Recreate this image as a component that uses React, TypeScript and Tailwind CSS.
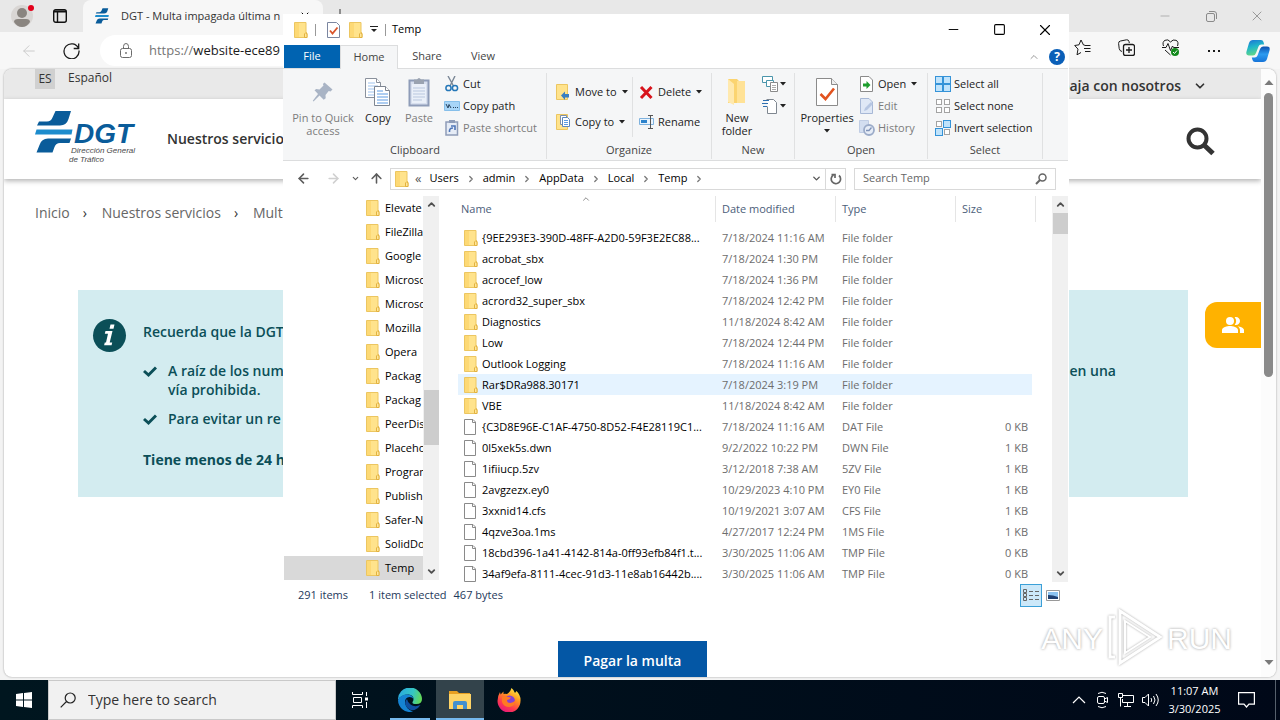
import React from "react";
import clsx from "clsx";
import {
  ArrowLeft,
  ArrowRight,
  ArrowUp,
  ChevronDown,
  ChevronRight,
  ChevronUp,
  Minus,
  Square,
  X,
} from "lucide-react";
import { MdPeopleAlt } from "react-icons/md";

interface FileRow {
  name: string;
  date: string;
  type: string;
  size?: string;
  selected?: boolean;
}

const files: FileRow[] = [
  { name: "{9EE293E3-390D-48FF-A2D0-59F3E2EC88...", date: "7/18/2024 11:16 AM", type: "File folder" },
  { name: "acrobat_sbx", date: "7/18/2024 1:30 PM", type: "File folder" },
  { name: "acrocef_low", date: "7/18/2024 1:36 PM", type: "File folder" },
  { name: "acrord32_super_sbx", date: "7/18/2024 12:42 PM", type: "File folder" },
  { name: "Diagnostics", date: "11/18/2024 8:42 AM", type: "File folder" },
  { name: "Low", date: "7/18/2024 12:44 PM", type: "File folder" },
  { name: "Outlook Logging", date: "7/18/2024 11:16 AM", type: "File folder" },
  { name: "Rar$DRa988.30171", date: "7/18/2024 3:19 PM", type: "File folder", selected: true },
  { name: "VBE", date: "11/18/2024 8:42 AM", type: "File folder" },
  { name: "{C3D8E96E-C1AF-4750-8D52-F4E28119C1...", date: "7/18/2024 11:16 AM", type: "DAT File", size: "0 KB" },
  { name: "0l5xek5s.dwn", date: "9/2/2022 10:22 PM", type: "DWN File", size: "1 KB" },
  { name: "1ifiiucp.5zv", date: "3/12/2018 7:38 AM", type: "5ZV File", size: "1 KB" },
  { name: "2avgzezx.ey0", date: "10/29/2023 4:10 PM", type: "EY0 File", size: "1 KB" },
  { name: "3xxnid14.cfs", date: "10/19/2021 3:07 AM", type: "CFS File", size: "1 KB" },
  { name: "4qzve3oa.1ms", date: "4/27/2017 12:24 PM", type: "1MS File", size: "1 KB" },
  { name: "18cbd396-1a41-4142-814a-0ff93efb84f1.t...", date: "3/30/2025 11:06 AM", type: "TMP File", size: "0 KB" },
  { name: "34af9efa-8111-4cec-91d3-11e8ab16442b....", date: "3/30/2025 11:06 AM", type: "TMP File", size: "0 KB" },
];

const treeFolders = [
  "Elevate",
  "FileZilla",
  "Google",
  "Microso",
  "Microso",
  "Mozilla",
  "Opera",
  "Packag",
  "Packag",
  "PeerDis",
  "Placeho",
  "Program",
  "Publish",
  "Safer-N",
  "SolidDo",
  "Temp",
];

const crumbs = ["Users", "admin", "AppData", "Local", "Temp"];

/* ---------- icons ---------- */

function FolderIcon() {
  return (
    <svg width="14" height="16" viewBox="0 0 14 16" className="shrink-0">
      <path d="M.5 .5H12V10l1 1v4.500H.5Z" fill="#ffe38c" stroke="#ecc661" />
      <path d="M1 1h4v14H1Z" fill="#fdd975" />
      <path d="M10.500 15.500v-3.500q1-2.500 2.500 0v3.500Z" fill="#ffe79c" stroke="#e3b23f" />
    </svg>
  );
}

function PageIcon() {
  return (
    <svg width="14" height="16" viewBox="0 0 14 16" className="shrink-0">
      <path d="M.5 .5H9l2.500 2.500V15.500H.5Z" fill="#fff" stroke="#8a8a8a" />
      <path d="M8.500 .5V3.500h3" fill="none" stroke="#8a8a8a" />
    </svg>
  );
}

function CheckPageIcon({ large = false }: { large?: boolean }) {
  return (
    <svg width={large ? 22 : 13} height={large ? 30 : 16} viewBox={large ? "0 0 22 30" : "0 0 13 16"}>
      {large ? (
        <>
          <path d="M.5 1.500H15.500l6 6V28.500H.5Z" fill="#fff" stroke="#8b8b8b" />
          <path d="M15.500 1.500v6h6" fill="#eee" stroke="#8b8b8b" />
          <path d="M4.500 17l5 5L18 11.500" fill="none" stroke="#e2531f" strokeWidth="2.600" />
        </>
      ) : (
        <>
          <path d="M.5 .5H9.500l3 3v12H.5Z" fill="#fff" stroke="#7b86a0" />
          <path d="M3 8.500l2.500 3L10.500 5.500" fill="none" stroke="#d9552b" strokeWidth="1.800" />
        </>
      )}
    </svg>
  );
}

function Caret({ className = "" }: { className?: string }) {
  return (
    <svg width="6" height="4" viewBox="0 0 6 4" className={clsx("shrink-0", className)}>
      <path d="M0 0h6L3 3.500Z" fill="#222" />
    </svg>
  );
}

function PinIcon() {
  return (
    <svg width="22" height="22" viewBox="0 0 22 22">
      <path d="M12.500 1.500l8 7-2 2-1.800-.4-3.200 4 .2 3.200-2 1.400L7.500 14.500 1.500 20.500.8 19.800 6 13 2.500 9.300 4.200 8l3.300.5 4-4-.6-1.600Z" fill="#a9b4c5" />
    </svg>
  );
}

function CopyIcon() {
  return (
    <svg width="26" height="30" viewBox="0 0 26 30">
      <g stroke="#8a919c" fill="#fff">
        <path d="M.5 1.500h11l4 4v15H.5Z" />
        <path d="M11.500 1.500v4h4" />
      </g>
      <path d="M3 6h7M3 9h10M3 12h10M3 15h10M3 18h8" stroke="#9fc3ee" />
      <g stroke="#7d8591" fill="#fff">
        <path d="M9.500 9.500h11l4 4v15h-15Z" />
        <path d="M20.500 9.500v4h4" />
      </g>
      <path d="M12 14h6M12 17h11M12 20h11M12 23h11M12 26h11" stroke="#5c9be3" />
    </svg>
  );
}

function PasteIcon() {
  return (
    <svg width="22" height="30" viewBox="0 0 22 30">
      <path d="M1.500 3.500h19v25h-19Z" fill="#d7dfee" stroke="#8e9cb8" strokeWidth="2" />
      <path d="M4 7h14v19H4Z" fill="#eaf0f9" />
      <path d="M5 11h12M5 14h12M5 17h12M5 20h12M5 23h9" stroke="#b9c7de" />
      <path d="M6 2.500h3q2-3 4 0h3V7H6Z" fill="#9aa3b1" />
    </svg>
  );
}

function CutIcon() {
  return (
    <svg width="16" height="16" viewBox="0 0 16 16" fill="none">
      <path d="M4 0l5.500 10M11 0L6 10" stroke="#7a8796" strokeWidth="1.400" />
      <circle cx="4.500" cy="12" r="2.600" stroke="#2577b8" strokeWidth="1.500" />
      <circle cx="11" cy="12" r="2.600" stroke="#2577b8" strokeWidth="1.500" />
    </svg>
  );
}

function CopyPathIcon() {
  return (
    <svg width="16" height="16" viewBox="0 0 16 16">
      <path d="M.5 3.500h15v9H.5Z" fill="#a8d5f7" stroke="#86bfea" />
      <path d="M2 6l2 4 1-3.500L7 10M9 9.500h1M11 9.500h1M13 9.500h1" stroke="#28435e" fill="none" />
    </svg>
  );
}

function PasteShortcutIcon() {
  return (
    <svg width="16" height="16" viewBox="0 0 16 16">
      <path d="M2 2h11.500v13H2Z" fill="#e6ecf6" stroke="#8e9cb8" strokeWidth="1.500" />
      <path d="M5 0h6v3H5Z" fill="#8e9cb8" />
      <path d="M5.500 12q-.5-4 3.500-4M7 6h4v4" stroke="#4f76b8" strokeWidth="1.600" fill="none" />
    </svg>
  );
}

function MoveToIcon({ copy = false }: { copy?: boolean }) {
  return (
    <svg width="16" height="16" viewBox="0 0 16 16">
      <path d="M.5 .5h11v15H.5Z" fill="#ffe38c" stroke="#ecc661" />
      {copy ? (
        <>
          <path d="M4.500 1.500h6v9h-6Z" fill="#fff" stroke="#7d8fa8" />
          <path d="M6.500 3.500h5l2 2v7h-7Z" fill="#fff" stroke="#5c87bf" />
          <path d="M8 6.500h4M8 8.500h4M8 10.500h4" stroke="#5c9be3" />
        </>
      ) : (
        <path d="M5 11.500l4-4v2.500h4v3.500H9V16Z" fill="#3a7fc2" />
      )}
    </svg>
  );
}

function DeleteIcon() {
  return (
    <svg width="16" height="16" viewBox="0 0 16 16">
      <path d="M2 3l10.500 11M12.500 3L2 14" stroke="#d8141c" strokeWidth="3" />
    </svg>
  );
}

function RenameIcon() {
  return (
    <svg width="16" height="16" viewBox="0 0 16 16" fill="none">
      <path d="M.5 4.500h14v6H.5Z" fill="#eaf4fd" stroke="#7fb2de" />
      <path d="M2 6h6v3H2Z" fill="#2d83cc" />
      <path d="M9 1.500h5M9 14.500h5M11.500 1.500v13" stroke="#555" />
    </svg>
  );
}

function NewFolderIcon() {
  return (
    <svg width="20" height="28" viewBox="0 0 20 28">
      <path d="M1 1h9l2 2h6v22H1Z" fill="#fbd470" />
      <path d="M10 3h8v22h-8Z" fill="#ffe296" />
      <path d="M1 1l6 5v21l-6-3Z" fill="#ffe9ae" />
    </svg>
  );
}

function NewItemIcon() {
  return (
    <svg width="17" height="16" viewBox="0 0 17 16" fill="#fff">
      <path d="M.5 .5h10v6H.5Z" stroke="#4a95ab" />
      <path d="M4.500 4.500h7v6h-7Z" stroke="#4a95ab" />
      <path d="M8.500 6.500h7v9h-7Z" stroke="#8a8a8a" />
      <path d="M10 9.500h4M10 11.500h4M10 13.500h4" stroke="#aaa" />
    </svg>
  );
}

function EasyAccessIcon() {
  return (
    <svg width="17" height="16" viewBox="0 0 17 16" fill="none">
      <path d="M4.500 1.500h7l3 3v11h-9v-7" fill="#fff" stroke="#7f8790" />
      <path d="M1 2.500h6M0 5.500h6M1 8.500h4" stroke="#2e6fb0" />
    </svg>
  );
}

function OpenIcon({ kind }: { kind: "open" | "edit" | "history" }) {
  if (kind === "history") {
    return (
      <svg width="16" height="16" viewBox="0 0 16 16">
        <path d="M.5 .5h9v12h-9Z" fill="#d3def0" stroke="#c0cde4" />
        <circle cx="10" cy="10" r="5" fill="#e7edf7" stroke="#9cacc9" strokeWidth="1.800" />
        <path d="M7 10.500h3l2.500-3" stroke="#7f93b8" strokeWidth="1.300" fill="none" />
      </svg>
    );
  }
  return (
    <svg width="16" height="16" viewBox="0 0 16 16">
      <path d="M1.500 .5h8.500l3.500 3.500v11.500h-12Z" fill={kind === "open" ? "#fff" : "#dfe8f6"} stroke={kind === "open" ? "#8a8a8a" : "#a7b8d6"} />
      {kind === "open" ? (
        <path d="M4 7.500h3.500V5l4 4-4 4v-2.500H4Z" fill="#1e9e2d" />
      ) : (
        <path d="M5 13l1-3 6-6 2 2-6 6Z" fill="#b6c6e2" />
      )}
    </svg>
  );
}

function SelectIcon({ filled }: { filled: boolean[] }) {
  const spots = [
    [0.5, 0.5],
    [8.5, 0.5],
    [0.5, 8.5],
    [8.5, 8.5],
  ];
  return (
    <svg width="16" height="16" viewBox="0 0 16 16">
      {spots.map(([x, y], i) => (
        <rect
          key={i}
          x={filled[i] ? x : x + 1}
          y={filled[i] ? y : y + 1}
          width={filled[i] ? 7 : 5}
          height={filled[i] ? 7 : 5}
          fill={filled[i] ? "#c0e3fb" : "#fff"}
          stroke={filled[i] ? "#3593d8" : "#a3a3a3"}
        />
      ))}
    </svg>
  );
}

function SearchGlass() {
  return (
    <svg width="16" height="16" viewBox="0 0 16 16" fill="none" stroke="currentColor" className="shrink-0">
      <path d="M7 9L.7 15.300M15.200 6a5 5 0 1 1-10 0 5 5 0 0 1 10 0Z" strokeWidth="1.200" />
    </svg>
  );
}

function DgtShapes() {
  return (
    <>
      <path d="M20.500 0H36l-2.500 8q-2 6.500-8.500 6.500H2L4 10.500H12q4 0 5.500-4Z" fill="#0a5c9a" />
      <path d="M1.500 18.500H37.500L36.500 23.500H0Z" fill="#1c8ccd" />
      <path d="M36 27.500L34.500 32H25q-4 0-5.500 4l-2 5.500H1.500L4.500 34q2-6.500 8.500-6.500Z" fill="#0a5c9a" />
    </>
  );
}

function CopilotIcon() {
  return (
    <svg width="24" height="24" viewBox="0 0 24 24">
      <defs>
        <linearGradient id="cop-a" x1="0" y1="0" x2="0.300" y2="1">
          <stop offset="0" stopColor="#1d6fd6" />
          <stop offset="0.500" stopColor="#1fb6c9" />
          <stop offset="1" stopColor="#5fd68a" />
        </linearGradient>
        <linearGradient id="cop-b" x1="0.500" y1="0" x2="0.500" y2="1">
          <stop offset="0" stopColor="#0c4fae" />
          <stop offset="0.500" stopColor="#2b9bf0" />
          <stop offset="1" stopColor="#1674d8" />
        </linearGradient>
      </defs>
      <path d="M7 1h8q2 0 2.500 2l.7 2.500h-3q-2 0-2.700 2L10 14q-1 2.500-3 2.500H3q-3.500 0-2.500-4L3 4q1-3 4-3Z" fill="url(#cop-a)" />
      <path d="M17 23H9q-2 0-2.500-2l-.7-2.500h3q2 0 2.700-2L14 10q1-2.500 3-2.500h4q3.500 0 2.500 4L21 20q-1 3-4 3Z" fill="url(#cop-b)" />
    </svg>
  );
}

function EdgeIcon() {
  return (
    <svg width="24" height="24" viewBox="0 0 24 24">
      <defs>
        <linearGradient id="edge-a" x1="0" y1="0.300" x2="1" y2="0.500">
          <stop offset="0" stopColor="#2aa9e0" />
          <stop offset="0.600" stopColor="#35c6c4" />
          <stop offset="1" stopColor="#63d957" />
        </linearGradient>
      </defs>
      <path d="M0 12A12 12 0 0 1 24 11q0 5-5.500 5-4.500 0-4-2 1-1 1-3 0-4-5-4.500Q3 6.500 0 12Z" fill="url(#edge-a)" />
      <path d="M0 12Q3 6 10 6.500q5 .5 5.500 4.500-1-2-4-2Q7 9.500 7 14q.5 7 8 9.600A12 12 0 0 1 0 12Z" fill="#1583d3" />
      <path d="M9 11q-3 3-1 7 3 5 8.500 4 4-1.500 6-5-6 2.500-10-.5-3-2.500-3.500-5.500Z" fill="#0f4fa0" />
    </svg>
  );
}

function FirefoxIcon() {
  return (
    <svg width="24" height="24" viewBox="0 0 24 24">
      <defs>
        <linearGradient id="fox" x1="0.800" y1="0" x2="0.250" y2="1">
          <stop offset="0" stopColor="#fff04a" />
          <stop offset="0.350" stopColor="#ff9a1f" />
          <stop offset="0.700" stopColor="#ff3b4d" />
          <stop offset="1" stopColor="#e5157f" />
        </linearGradient>
      </defs>
      <path d="M14.500 0q2.500 2 3.500 5l1.500-2q4.500 4.500 4 10A11.500 11.500 0 0 1 .5 13Q.5 8 3 4l.6 2.500Q5 5 6.500 3.500V6q1.500-.6 3.500 0 3.500-2 4.500-6Z" fill="url(#fox)" />
      <circle cx="12.500" cy="13" r="5.500" fill="#8441d6" />
      <path d="M5 9q3-2 6 0l3 .5q-1 2-4 2.500 0 3 3.500 3 3 0 5-3 0 6-6 7-6 0-7.500-5Z" fill="#ff7a22" />
    </svg>
  );
}

function ExplorerIcon() {
  return (
    <svg width="22" height="20" viewBox="0 0 22 20">
      <path d="M0 1h8l2 2h11v3H0Z" fill="#e9a021" />
      <path d="M0 4h22v15H0Z" fill="#ffd466" />
      <path d="M4 19v-6q0-2 2-2h10q2 0 2 2v6h-4v-4H8v4Z" fill="#4390cf" />
    </svg>
  );
}

function CheckMark() {
  return (
    <svg width="14" height="19" viewBox="0 0 14 19" fill="none" className="shrink-0">
      <path d="M1 10l4.500 4L13 6.500" stroke="#0b4f58" strokeWidth="3" />
    </svg>
  );
}

/* ---------- browser ---------- */

function BrowserChrome() {
  return (
    <header>
      <div className="flex h-8 bg-[#e8e8e8]">
        <div className="flex w-[83px] items-center gap-5 pl-[11px]">
          <button className="relative" aria-label="Profile">
            <svg width="22" height="24" viewBox="0 0 22 24">
              <circle cx="11" cy="12" r="11" fill="#d9d6d4" />
              <circle cx="11" cy="9" r="5" fill="#8a8580" />
              <path d="M3 18q0-3 4-3h8q4 0 4 3-3 5-8 5t-8-5Z" fill="#8a8580" />
            </svg>
            <span className="absolute top-px -right-px size-[6px] rounded-full bg-[#e3001b]" />
          </button>
          <button aria-label="Workspaces">
            <svg width="14" height="14" viewBox="0 0 14 14" fill="none" stroke="#111">
              <rect x=".7" y=".7" width="12.600" height="12.600" rx="2" strokeWidth="1.400" />
              <path d="M1 2.500h12" strokeWidth="2" />
              <path d="M4.500 3v10" strokeWidth="1.400" />
            </svg>
          </button>
        </div>
        <div className="flex w-60 items-center gap-3 overflow-hidden rounded-t-lg bg-[#f7f7f7] px-3">
          <svg width="14" height="16" viewBox="0 0 38 42" className="shrink-0">
            <DgtShapes />
          </svg>
          <span className="flex-1 text-[11px] whitespace-nowrap text-[#333]">DGT - Multa impagada última n</span>
          <button aria-label="Close tab">
            <X size={12} />
          </button>
        </div>
        <button className="px-[10px] text-[#333]" aria-label="New tab">
          <svg width="14" height="14" viewBox="0 0 14 14" stroke="currentColor">
            <path d="M7 0v14M0 7h14" />
          </svg>
        </button>
        <div className="flex flex-1 justify-end text-[#8a8a8a]">
          <button className="flex w-[46px] items-center justify-center" aria-label="Minimize">
            <Minus size={14} strokeWidth={1} />
          </button>
          <button className="flex w-[46px] items-center justify-center" aria-label="Restore">
            <svg width="11" height="11" viewBox="0 0 11 11" fill="none" stroke="currentColor">
              <rect x=".5" y="2.500" width="8" height="8" rx="1.500" />
              <path d="M3 .5h5q2.500 0 2.500 2.500v5" />
            </svg>
          </button>
          <button className="flex w-[46px] items-center justify-center" aria-label="Close">
            <X size={16} strokeWidth={1.25} />
          </button>
        </div>
      </div>

      <div className="flex h-[37px] items-center bg-[#f7f7f7]">
        <div className="flex w-[100px] items-center gap-[25px] pl-5">
          <button className="text-[#c9c9c9]" aria-label="Back">
            <ArrowLeft size={18} strokeWidth={1.25} />
          </button>
          <button aria-label="Reload">
            <svg width="17" height="17" viewBox="0 0 17 17" fill="none" stroke="#1b1b1b" strokeWidth="1.300">
              <path d="M15.500 6.500A7.500 7.500 0 1 0 16 8.500M15.700 1.500v5h-5" />
            </svg>
          </button>
        </div>
        <div className="flex h-[31px] flex-1 items-center rounded-full bg-white pl-5">
          <svg width="12" height="16" viewBox="0 0 12 16" fill="none" stroke="#6b6b6b" className="mr-[17px]">
            <rect x=".5" y="5.500" width="11" height="9" rx="2" />
            <path d="M3.500 5V3.500q0-3 2.500-3t2.500 3V5" />
            <circle cx="6" cy="10" r=".6" />
          </svg>
          <label htmlFor="url" className="text-[13px] text-[#767676]">
            https://
          </label>
          <input id="url" className="min-w-0 flex-1 text-[13px] text-[#1b1b1b] outline-none" defaultValue="website-ece89" />
        </div>
        <div className="flex text-[#1b1b1b]">
          <button className="flex w-11 justify-center" aria-label="Favorites">
            <svg width="17" height="17" viewBox="0 0 17 17" fill="none" stroke="currentColor">
              <path d="M11 6.300L9.500 6 7 1 5 5.800.7 6.500l3.300 3.600L3 15.800 7 13.500M11 6.500h5.500M10 9.500h6.500M11 12.500h5.500" />
            </svg>
          </button>
          <button className="flex w-11 justify-center" aria-label="Collections">
            <svg width="17" height="17" viewBox="0 0 17 17" fill="none" stroke="currentColor">
              <path d="M4 12.500Q1.500 12 1.200 9.500L.6 4.500Q.5 2.300 2.500 2l6-1.200q2-.3 2.500 1.700l.3 1.500" />
              <rect x="5.500" y="5.500" width="11" height="11" rx="2" strokeWidth="1.300" />
              <path d="M11 8v6M8 11h6" strokeWidth="1.300" />
            </svg>
          </button>
          <button className="flex w-11 justify-center" aria-label="Browser essentials">
            <svg width="17" height="17" viewBox="0 0 17 17" fill="none" stroke="currentColor">
              <path d="M1.500 7Q0 3 3 1.300T8.500 3Q11 0 14 1.300T15.500 7M0 8.500h4L6 4.500l2.500 7L10.500 7l1 1.500H17M3 11l5.500 5" />
              <circle cx="13" cy="13" r="4" fill="#138a1c" stroke="none" />
              <path d="M11 13l1.500 1.500L15 11.500" stroke="#fff" />
            </svg>
          </button>
          <button className="flex w-11 items-center justify-center" aria-label="More">
            <svg width="14" height="4" viewBox="0 0 14 4">
              <path d="M1 1h2v2H1ZM6 1h2v2H6ZM11 1h2v2H11Z" fill="currentColor" />
            </svg>
          </button>
          <button className="flex w-11 justify-center" aria-label="Copilot">
            <CopilotIcon />
          </button>
        </div>
      </div>
    </header>
  );
}

function SitePage() {
  return (
    <div className="relative min-w-0 flex-1 overflow-hidden">
      <div className="flex h-[30px] justify-between bg-[#e9e9e9] pr-[54px] pl-[31px]">
        <div className="flex gap-[13px] text-xs font-medium text-[#333]">
          <span className="flex h-5 w-5 items-center justify-center bg-[#d0d0d0] pb-px">ES</span>
          <span className="leading-[18px]">Español</span>
        </div>
        <button className="flex items-center gap-3 pt-1 text-sm font-semibold text-[#333]">
          Trabaja con nosotros
          <ChevronDown size={14} strokeWidth={3} />
        </button>
      </div>

      <div className="relative flex h-20 items-center justify-between bg-white pr-[46px] pl-[31px] shadow-[0_2px_5px_rgba(0,0,0,0.3)]">
        <div className="flex items-center gap-[31px]">
          <svg width="101" height="56" viewBox="0 0 101 56">
            <DgtShapes />
            <text x="39" y="32" fontSize="28" fontWeight="700" fontStyle="italic" fontFamily="Liberation Sans, sans-serif" fill="#0a5c9a">
              DGT
            </text>
            <g fontSize="8" fontStyle="italic" fontFamily="Liberation Sans, sans-serif" fill="#4a4a4a">
              <text x="36" y="42">Dirección General</text>
              <text x="34" y="51">de Tráfico</text>
            </g>
          </svg>
          <a href="#servicios" className="text-sm font-semibold text-[#333]">
            Nuestros servicios
          </a>
        </div>
        <button className="pt-1 text-[#333]" aria-label="Buscar">
          <svg width="30" height="30" viewBox="0 0 30 30" fill="none" stroke="currentColor">
            <circle cx="12.500" cy="12.500" r="9" strokeWidth="4" />
            <path d="M19 19l9 8.500" strokeWidth="5" />
          </svg>
        </button>
      </div>

      <nav className="mt-[23px] flex h-[22px] items-center gap-[13px] pl-[31px] text-sm text-[#666]">
        <a href="#inicio">Inicio</a>
        <span className="w-[6px] text-[#333]">›</span>
        <a href="#servicios">Nuestros servicios</a>
        <span className="w-[6px] text-[#333]">›</span>
        <a href="#multas">Mult</a>
      </nav>

      <section className="mr-[73px] ml-[74px] mt-[66px] flex h-[207px] gap-4 bg-[#d3ecf0] pt-[27px] pr-[72px] pl-[14px] text-sm font-semibold text-[#0b4f58]">
        <svg width="35" height="35" viewBox="0 0 35 35" className="mt-px shrink-0">
          <circle cx="17.500" cy="17.500" r="16.500" fill="#0b4f58" />
          <path d="M18.500 6.500h4l-1 4.200h-4ZM13.500 13h7l-2.800 11.500h2.500l-.6 2.800h-7.500l.7-2.800h1.200l2-8.700h-3.200Z" fill="#fff" />
        </svg>
        <div className="min-w-0 flex-1">
          <p className="leading-[30px]">Recuerda que la DGT</p>
          <ul className="mt-[14px] space-y-[10px] leading-[19px]">
            <li className="flex gap-[11px]">
              <CheckMark />
              <div className="flex-1">
                <p className="flex justify-between">
                  <span>A raíz de los num</span>
                  <span>en una</span>
                </p>
                <p>vía prohibida.</p>
              </div>
            </li>
            <li className="flex gap-[11px]">
              <CheckMark />
              <p>Para evitar un re</p>
            </li>
          </ul>
          <p className="mt-[22px] font-bold">Tiene menos de 24 h</p>
        </div>
      </section>

      <button className="mx-auto mt-36 block h-10 w-[149px] bg-[#0457a5] text-sm font-semibold text-white">
        Pagar la multa
      </button>

      <button className="absolute top-[233px] right-0 flex h-[46px] w-14 items-center justify-center rounded-l-xl bg-[#ffb200] text-white" aria-label="Contacto">
        <MdPeopleAlt size={24} />
      </button>
    </div>
  );
}

function Browser() {
  return (
    <div className="flex h-full flex-col bg-[#f3f3f3]">
      <BrowserChrome />
      <main className="mx-1 mb-[3px] flex min-h-0 flex-1 overflow-hidden rounded-lg bg-white shadow-[0_0_2px_rgba(0,0,0,0.4)]">
        <SitePage />
        <div className="flex w-[15px] flex-col items-center bg-[#fcfcfc] py-[10px]">
          <svg width="10" height="8" viewBox="0 0 10 8" className="mb-[6px]">
            <path d="M5 1l4.500 5h-9Z" fill="#7a7a7a" />
          </svg>
          <div className="h-[284px] w-[9px] rounded-full bg-[#8a8a8a]" />
          <svg width="10" height="8" viewBox="0 0 10 8" className="mt-auto">
            <path d="M.5 1h9L5 6Z" fill="#7a7a7a" />
          </svg>
        </div>
      </main>
    </div>
  );
}

/* ---------- file explorer ---------- */

function RibbonGroup({ label, className, children }: { label: string; className: string; children: React.ReactNode }) {
  return (
    <div className={clsx("mt-1 mb-px flex shrink-0 flex-col border-r border-[#e0e1e2]", className)}>
      <div className="flex flex-1">{children}</div>
      <div className="h-[18px] text-center leading-[18px] text-[#444]">{label}</div>
    </div>
  );
}

function BigButton({ icon, disabled, className, children }: { icon: React.ReactNode; disabled?: boolean; className: string; children: React.ReactNode }) {
  return (
    <button className={clsx("flex flex-col items-center leading-[13px]", disabled ? "text-[#7c7c7c]" : "text-[#222]", className)}>
      <span className="flex h-[38px] items-center">{icon}</span>
      {children}
    </button>
  );
}

function SmallButton({ icon, label, disabled, menu }: { icon: React.ReactNode; label: string; disabled?: boolean; menu?: boolean }) {
  return (
    <button className={clsx("flex h-[22px] items-center gap-[3px] whitespace-nowrap", disabled ? "text-[#7c7c7c]" : "text-[#222]")}>
      {icon}
      {label}
      {menu && <Caret className="ml-[2px]" />}
    </button>
  );
}

function Ribbon() {
  return (
    <div className="flex h-[92px] border-b border-[#dcddde] bg-[#f5f6f7] pl-px text-[11px]">
      <RibbonGroup label="Clipboard" className="w-[263px]">
        <BigButton icon={<PinIcon />} disabled className="w-[78px]">
          <span>Pin to Quick</span>
          <span>access</span>
        </BigButton>
        <BigButton icon={<CopyIcon />} className="w-8">
          Copy
        </BigButton>
        <BigButton icon={<PasteIcon />} disabled className="w-[50px]">
          Paste
        </BigButton>
        <div>
          <SmallButton icon={<CutIcon />} label="Cut" />
          <SmallButton icon={<CopyPathIcon />} label="Copy path" />
          <SmallButton icon={<PasteShortcutIcon />} label="Paste shortcut" disabled />
        </div>
      </RibbonGroup>

      <RibbonGroup label="Organize" className="w-[165px]">
        <div className="my-1 flex w-[86px] flex-col justify-between border-r border-[#e0e1e2] py-1 pl-[9px]">
          <SmallButton icon={<MoveToIcon />} label="Move to" menu />
          <SmallButton icon={<MoveToIcon copy />} label="Copy to" menu />
        </div>
        <div className="my-1 flex flex-col justify-between py-1 pl-[6px]">
          <SmallButton icon={<DeleteIcon />} label="Delete" menu />
          <SmallButton icon={<RenameIcon />} label="Rename" />
        </div>
      </RibbonGroup>

      <RibbonGroup label="New" className="w-[83px]">
        <BigButton icon={<NewFolderIcon />} className="w-[50px]">
          <span>New</span>
          <span>folder</span>
        </BigButton>
        <div>
          <button className="flex h-[22px] items-center gap-px" aria-label="New item">
            <NewItemIcon />
            <Caret />
          </button>
          <button className="flex h-[22px] items-center gap-px" aria-label="Easy access">
            <EasyAccessIcon />
            <Caret />
          </button>
        </div>
      </RibbonGroup>

      <RibbonGroup label="Open" className="w-[133px]">
        <BigButton icon={<CheckPageIcon large />} className="w-16">
          Properties
          <Caret className="mt-[5px]" />
        </BigButton>
        <div>
          <SmallButton icon={<OpenIcon kind="open" />} label="Open" menu />
          <SmallButton icon={<OpenIcon kind="edit" />} label="Edit" disabled />
          <SmallButton icon={<OpenIcon kind="history" />} label="History" disabled />
        </div>
      </RibbonGroup>

      <RibbonGroup label="Select" className="w-[115px]">
        <div className="pl-[7px]">
          <SmallButton icon={<SelectIcon filled={[true, true, true, true]} />} label="Select all" />
          <SmallButton icon={<SelectIcon filled={[false, false, false, false]} />} label="Select none" />
          <SmallButton icon={<SelectIcon filled={[false, true, true, false]} />} label="Invert selection" />
        </div>
      </RibbonGroup>
    </div>
  );
}

function AddressRow() {
  return (
    <div className="flex h-[35px] items-center pr-3 pl-px text-[11px]">
      <div className="flex w-[106px] items-center text-[#5c5c5c]">
        <button className="ml-3" aria-label="Back">
          <ArrowLeft size={15} strokeWidth={2.5} />
        </button>
        <button className="ml-[15px] text-[#d0d0d0]" aria-label="Forward">
          <ArrowRight size={15} strokeWidth={2.5} />
        </button>
        <button className="ml-[10px]" aria-label="Recent locations">
          <ChevronDown size={9} strokeWidth={3} />
        </button>
        <button className="ml-[9px]" aria-label="Up">
          <ArrowUp size={15} strokeWidth={2.5} />
        </button>
      </div>
      <div className="flex h-[22px] flex-1 items-center border border-[#d9d9d9] pl-1">
        <FolderIcon />
        <span className="mr-2 ml-[6px] text-[13px] text-[#555]">«</span>
        {crumbs.map((crumb) => (
          <React.Fragment key={crumb}>
            <a href="#path">{crumb}</a>
            <ChevronRight size={10} strokeWidth={3} className="mx-[7px] text-[#777]" />
          </React.Fragment>
        ))}
        <button className="ml-auto px-[3px] text-[#555]" aria-label="Previous locations">
          <ChevronDown size={11} strokeWidth={3} />
        </button>
        <button className="flex h-full w-5 items-center justify-center border-l border-[#d9d9d9] text-[#666]" aria-label="Refresh">
          <svg width="12" height="12" viewBox="0 0 12 12" fill="none" stroke="currentColor" strokeWidth="1.700">
            <path d="M3.500 2A4.700 4.700 0 1 0 9 2.500M1.500 1.500H5V5" />
          </svg>
        </button>
      </div>
      <div className="ml-2 flex h-[22px] w-[202px] items-center border border-[#d9d9d9] px-2 text-[#666]">
        <input aria-label="Search Temp" placeholder="Search Temp" className="min-w-0 flex-1 outline-none placeholder:text-[#666]" />
        <svg width="12" height="12" viewBox="0 0 12 12" fill="none" stroke="currentColor">
          <circle cx="7.500" cy="4.500" r="3.500" strokeWidth="1.500" />
          <path d="M5 7L1 11" strokeWidth="2" />
        </svg>
      </div>
    </div>
  );
}

function ScrollTrack({ className, children }: { className?: string; children: React.ReactNode }) {
  return (
    <div className={clsx("flex w-4 shrink-0 flex-col items-center bg-[#f0f0f0] text-[#505050]", className)}>
      <ChevronUp size={11} strokeWidth={4} className="my-[3px] shrink-0" />
      {children}
      <ChevronDown size={11} strokeWidth={4} className="mt-auto mb-[3px] shrink-0" />
    </div>
  );
}

function FileTable() {
  const th = "h-[31px] p-0 align-top font-normal";
  const thInner = "h-[26px] leading-[26px]";
  return (
    <table className="w-[578px] table-fixed border-collapse text-left text-[11px]">
      <colgroup>
        <col className="w-[257px]" />
        <col className="w-[120px]" />
        <col className="w-[120px]" />
        <col className="w-[77px]" />
        <col className="w-1" />
      </colgroup>
      <thead className="text-[#4c607a]">
        <tr>
          <th className={clsx(th, "relative")}>
            <div className={clsx(thInner, "pl-[3px]")}>Name</div>
            <ChevronUp size={10} className="absolute top-[-2px] left-[123px] text-[#777]" />
          </th>
          <th className={th}>
            <div className={clsx(thInner, "border-l border-[#e5e5e5] pl-[6px]")}>Date modified</div>
          </th>
          <th className={th}>
            <div className={clsx(thInner, "border-l border-[#e5e5e5] pl-[6px]")}>Type</div>
          </th>
          <th className={th}>
            <div className={clsx(thInner, "border-l border-[#e5e5e5] pl-[6px]")}>Size</div>
          </th>
          <th className={th}>
            <div className={clsx(thInner, "border-r border-[#e5e5e5]")} />
          </th>
        </tr>
      </thead>
      <tbody>
        {files.map((file) => {
          const bg = file.selected && "bg-[#e5f3ff]";
          return (
            <tr key={file.name} className="h-[21px] leading-[21px] whitespace-nowrap text-[#6d6d6d]">
              <td className={clsx("p-0 pl-[6px]", bg)}>
                <div className="flex h-[21px] items-center gap-1 text-black">
                  {file.size ? <PageIcon /> : <FolderIcon />}
                  {file.name}
                </div>
              </td>
              <td className={clsx("p-0 pl-[7px]", bg)}>{file.date}</td>
              <td className={clsx("p-0 pl-[7px]", bg)}>{file.type}</td>
              <td className={clsx("p-0 pr-1 text-right", bg)}>{file.size}</td>
              <td className="p-0" />
            </tr>
          );
        })}
      </tbody>
    </table>
  );
}

function Explorer() {
  return (
    <section className="absolute top-[14px] left-[283px] w-[786px] bg-white pr-px text-black">
      <div className="flex h-[31px] items-center pl-[11px]">
        <FolderIcon />
        <span className="mx-[7px] h-3 w-px bg-[#999]" />
        <span className="ml-1">
          <CheckPageIcon />
        </span>
        <span className="ml-[9px]">
          <FolderIcon />
        </span>
        <svg width="8" height="7" viewBox="0 0 8 7" className="mx-[7px]">
          <path d="M0 .5h8" stroke="#222" />
          <path d="M1 3h6L4 6Z" fill="#222" />
        </svg>
        <span className="mr-[6px] h-3 w-px bg-[#999]" />
        <h1 className="text-[11px]">Temp</h1>
        <div className="ml-auto flex">
          <button className="flex w-[46px] items-center justify-center" aria-label="Minimize">
            <Minus size={15} strokeWidth={1.5} />
          </button>
          <button className="flex w-[46px] items-center justify-center" aria-label="Maximize">
            <Square size={13} strokeWidth={2} />
          </button>
          <button className="flex w-[46px] items-center justify-center" aria-label="Close">
            <X size={18} strokeWidth={1.5} />
          </button>
        </div>
      </div>

      <div className="flex h-6 border-b border-[#dcddde] pl-px text-[11px] text-[#444]">
        <button className="w-14 bg-[#0063b1] text-white">File</button>
        <button className="-mb-px w-[58px] border border-b-0 border-[#dcddde] bg-[#f5f6f7]">Home</button>
        <button className="w-[58px]">Share</button>
        <button className="w-[54px]">View</button>
        <div className="ml-auto flex items-center gap-[9px] pr-[3px]">
          <ChevronUp size={12} className="text-[#999]" />
          <button className="size-4 rounded-full bg-[#0a5fb8] text-[12px] leading-4 font-bold text-white" aria-label="Help">
            ?
          </button>
        </div>
      </div>

      <Ribbon />
      <AddressRow />

      <div className="flex h-[386px] overflow-hidden">
        <ul className="w-[140px] shrink-0 overflow-hidden pl-px text-[11px] whitespace-nowrap">
          {treeFolders.map((name, i) => (
            <li key={i} className={clsx("flex h-6 items-center gap-[5px] pl-[82px]", name === "Temp" && "bg-[#d9d9d9]")}>
              <FolderIcon />
              {name}
            </li>
          ))}
        </ul>
        <ScrollTrack className="mb-[2px]">
          <div className="mt-[177px] h-[55px] w-[15px] bg-[#cdcdcd]" />
        </ScrollTrack>
        <div className="flex-1 pl-[19px]">
          <FileTable />
        </div>
        <ScrollTrack>
          <div className="h-[21px] w-[15px] bg-[#cdcdcd]" />
        </ScrollTrack>
      </div>

      <footer className="flex h-[26px] items-center pr-2 pl-[15px] text-[11px] text-[#1e395b]">
        <span className="mr-[21px]">291 items</span>
        <span className="mr-[7px]">1 item selected</span>
        <span>467 bytes</span>
        <button className="ml-auto flex h-[23px] w-[22px] items-center justify-center border border-[#3ba0d8] bg-[#cce8f9]" aria-label="Details view">
          <svg width="16" height="13" viewBox="0 0 16 13" fill="none" stroke="#666">
            <path d="M.5 .5h3v3h-3ZM.5 4.500h3v3h-3ZM.5 8.500h3v3h-3ZM6 2.500h4M12 2.500h4M6 6.500h4M12 6.500h4M6 10.500h4M12 10.500h4" />
          </svg>
        </button>
        <button className="ml-1" aria-label="Thumbnail view">
          <svg width="14" height="11" viewBox="0 0 14 11">
            <path d="M.5 .5h13v10H.5Z" fill="#fff" stroke="#999" />
            <path d="M2 2h10v7H2Z" fill="#8cc3f0" />
            <path d="M2 5q5 0 10 2v2H2Z" fill="#1f3f70" />
          </svg>
        </button>
      </footer>
    </section>
  );
}

/* ---------- taskbar ---------- */

function Taskbar() {
  return (
    <footer className="flex h-10 shrink-0 bg-linear-to-r from-[#00161f] to-[#000818] text-white">
      <button className="flex w-12 items-center justify-center" aria-label="Start">
        <svg width="16" height="16" viewBox="0 0 16 16" fill="#fff">
          <path d="M0 2l7-1v6.500H0ZM8 .9L16 0v7.500H8ZM0 8.500h7V15l-7-1ZM8 8.500h8V16l-8-1.100Z" />
        </svg>
      </button>
      <div className="flex w-72 items-center gap-3 border border-[#c9c9c9] bg-[#f1f1f1] pl-[11px] text-[#222]">
        <SearchGlass />
        <input aria-label="Type here to search" placeholder="Type here to search" className="min-w-0 flex-1 text-sm outline-none placeholder:text-[#333]" />
      </div>
      <button className="flex w-12 items-center justify-center" aria-label="Task view">
        <svg width="16" height="16" viewBox="0 0 16 16" fill="none" stroke="#fff">
          <path d="M.5 0v2.500h10V0M.5 16v-2.500h10V16M1.500 5.500h8v5h-8ZM14.500 0v4M14.500 10v6" />
          <path d="M13 5.500h3v3h-3Z" fill="#fff" stroke="none" />
        </svg>
      </button>
      <button className="flex w-[52px] flex-col items-center justify-between pt-2" aria-label="Microsoft Edge">
        <EdgeIcon />
        <span className="h-[2px] w-10 bg-[#76b9ed]" />
      </button>
      <button className="flex w-12 flex-col items-center justify-between bg-[#33434b] pt-[10px]" aria-label="File Explorer">
        <ExplorerIcon />
        <span className="h-[2px] w-full bg-[#76b9ed]" />
      </button>
      <button className="flex w-[50px] items-center justify-center" aria-label="Firefox">
        <FirefoxIcon />
      </button>
      <div className="ml-auto flex items-center">
        <div className="flex items-center gap-2 pr-[9px]">
          <svg width="14" height="8" viewBox="0 0 14 8" fill="none" stroke="#fff" strokeWidth="1.200">
            <path d="M1 7l6-6 6 6" />
          </svg>
          <svg width="16" height="18" viewBox="0 0 16 18" fill="none" stroke="#fff">
            <path d="M4 2.500q4-2.500 8 0M4 15.500q4 2.500 8 0" />
            <rect x="3.500" y="5.500" width="7" height="7" rx="1.500" />
            <path d="M10.500 8l3-1.500v5l-3-1.500" />
          </svg>
          <svg width="16" height="14" viewBox="0 0 16 14" fill="none" stroke="#fff">
            <path d="M5 2.500h10.500v7H4.500V6M6 13.500h7M9.500 10v3" />
            <path d="M.5 .5h4v4h-4ZM2.500 4.500v9" />
          </svg>
          <svg width="17" height="14" viewBox="0 0 17 14" fill="none" stroke="#fff">
            <path d="M.5 4.500h2.500L6.500 1v12L3 9.500H.5ZM9 5q1.500 2 0 4M11.500 3q3 4 0 8M14 1q4.500 6 0 12" />
          </svg>
        </div>
        <div className="w-[53px] text-center text-[11px] leading-[18px] whitespace-nowrap">
          <div>11:07 AM</div>
          <div>3/30/2025</div>
        </div>
        <button className="mr-5 ml-[17px]" aria-label="Notifications">
          <svg width="17" height="16" viewBox="0 0 17 16" fill="none" stroke="#fff" strokeWidth="1.200">
            <path d="M.6 .6h15.800v11.500H11L8.500 15 6 12.100H.6Z" />
          </svg>
        </button>
        <span className="mr-1 h-10 w-px bg-[#56606c]" />
      </div>
    </footer>
  );
}

function Watermark() {
  return (
    <div className="pointer-events-none absolute right-12 bottom-3 flex h-[60px] items-center gap-1 font-['Liberation_Sans',sans-serif] text-[30px] text-white [text-shadow:0_0_3px_rgba(0,0,0,0.4)]">
      <span>ANY</span>
      <svg width="56" height="60" viewBox="0 0 56 60" fill="none" className="drop-shadow-[0_0_1px_rgba(0,0,0,0.35)]">
        <path d="M13 3v52l40-26Z" stroke="#fff" strokeWidth="3" />
        <path d="M18 13v32l25-16Z" stroke="#fff" strokeWidth="2" />
        <path d="M8 9H3v40h5" stroke="#fff" strokeWidth="3" />
      </svg>
      <span>RUN</span>
    </div>
  );
}

export default function App() {
  return (
    <div className="flex h-screen flex-col overflow-hidden font-['Open_Sans','Noto_Sans',sans-serif]">
      <div className="relative min-h-0 flex-1">
        <Browser />
        <Explorer />
        <Watermark />
      </div>
      <Taskbar />
    </div>
  );
}
